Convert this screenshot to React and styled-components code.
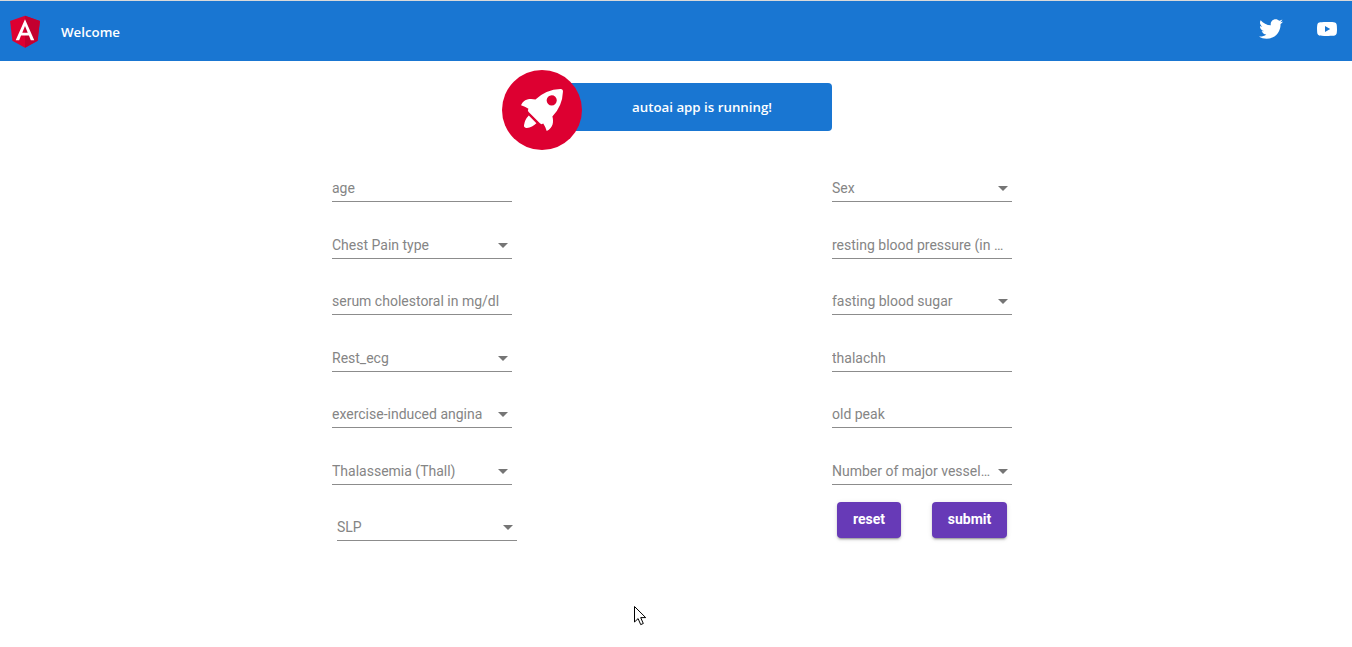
import React from "react";
import styled, { createGlobalStyle } from "styled-components";

const GlobalStyle = createGlobalStyle`
  html, body {
    margin: 0;
    padding: 0;
    height: 100%;
    overflow: hidden;
    background: #ffffff;
  }
`;

const Page = styled.div`
  position: relative;
  height: 647px;
  border-top: 1px solid #d9d9d9;
  box-sizing: border-box;
`;

const Toolbar = styled.header`
  height: 60px;
  background: #1976d2;
  display: flex;
  align-items: center;
  padding-left: 5px;
  color: #ffffff;
`;

const Logo = styled.svg`
  width: 40px;
  height: 40px;
  margin-right: 16px;
`;

const Title = styled.span`
  font-family: "Open Sans", sans-serif;
  font-weight: 600;
  font-size: 13.3px;
  padding-top: 2px;
`;

const Spacer = styled.div`
  flex: 1;
`;

const SocialIcon = styled.svg`
  width: 24px;
  height: 24px;
  fill: #ffffff;
  margin-right: ${(props) => props.$right}px;
  margin-top: -4px;
`;

const Hero = styled.div`
  display: flex;
  align-items: flex-start;
  width: 330px;
  margin: 9px 0 0 502px;
`;

const RocketBadge = styled.svg`
  width: 80px;
  height: 80px;
  flex: none;
  position: relative;
  z-index: 1;
`;

const Banner = styled.div`
  flex: 1;
  height: 48px;
  margin: 13px 0 0 -30px;
  padding-left: 20px;
  background: #1976d2;
  border-radius: 4px;
  color: #ffffff;
  font-family: "Open Sans", sans-serif;
  font-weight: 600;
  font-size: 13.3px;
  display: flex;
  align-items: center;
  justify-content: center;
`;

const Form = styled.form`
  display: flex;
  justify-content: space-between;
  width: 680px;
  margin: 11px 0 0 332px;
`;

const Column = styled.div`
  width: 180px;
  display: flex;
  flex-direction: column;
`;

const Field = styled.div`
  height: 56.5px;
  flex: none;
  margin-left: ${(props) => props.$shift || 0}px;
  display: flex;
`;

const FieldLine = styled.div`
  width: 180px;
  flex: none;
  height: 41px;
  border-bottom: 1px solid #8c8c8c;
  display: flex;
  align-items: flex-end;
  box-sizing: border-box;
  padding-bottom: 5px;
`;

const Label = styled.span`
  flex: 1;
  min-width: 0;
  font-family: Roboto, sans-serif;
  font-size: 14px;
  line-height: 16px;
  color: #858585;
  white-space: nowrap;
  overflow: hidden;
  text-overflow: ellipsis;
`;

const Caret = styled.span`
  flex: none;
  width: 0;
  height: 0;
  margin: 0 4px 5px 6px;
  border-left: 5px solid transparent;
  border-right: 5px solid transparent;
  border-top: 5px solid #757575;
`;

const Actions = styled.div`
  display: flex;
  gap: 31px;
  padding: 2px 0 0 5px;
`;

const ActionButton = styled.button`
  height: 36px;
  width: ${(props) => props.$width}px;
  padding: 0 0 2px;
  border: none;
  border-radius: 4px;
  background: #673ab7;
  color: #ffffff;
  font-family: Roboto, sans-serif;
  font-weight: 700;
  font-size: 14px;
  box-shadow: 0 3px 1px -2px rgba(0, 0, 0, 0.2), 0 2px 2px 0 rgba(0, 0, 0, 0.14),
    0 1px 5px 0 rgba(0, 0, 0, 0.12);
`;

const Pointer = styled.svg`
  position: absolute;
  left: 633px;
  top: 604px;
  width: 14px;
  height: 21px;
`;

const leftFields = [
  { label: "age" },
  { label: "Chest Pain type", select: true },
  { label: "serum cholestoral in mg/dl" },
  { label: "Rest_ecg", select: true },
  { label: "exercise-induced angina", select: true },
  { label: "Thalassemia (Thall)", select: true },
  { label: "SLP", select: true, shift: 5 },
];

const rightFields = [
  { label: "Sex", select: true },
  { label: "resting blood pressure (in mm Hg)" },
  { label: "fasting blood sugar", select: true },
  { label: "thalachh" },
  { label: "old peak" },
  { label: "Number of major vessels (0-3)", select: true },
];

const renderField = (field) => (
  <Field key={field.label} $shift={field.shift}>
    <FieldLine>
      <Label>{field.label}</Label>
      {field.select && <Caret />}
    </FieldLine>
  </Field>
);

const App = () => {
  return (
    <Page>
      <GlobalStyle />
      <Toolbar>
        <Logo viewBox="0 0 250 250">
          <polygon fill="#DD0031" points="125,30 31.9,63.2 46.1,186.3 125,230 203.9,186.3 218.1,63.2" />
          <polygon fill="#C3002F" points="125,30 125,230 203.9,186.3 218.1,63.2" />
          <path
            fill="#FFFFFF"
            d="M125,52.1L66.8,182.6h21.7l11.7-29.2h49.4l11.7,29.2h21.7L125,52.1z M142,135.4H108l17-40.9L142,135.4z"
          />
        </Logo>
        <Title>Welcome</Title>
        <Spacer />
        <SocialIcon $right={32} viewBox="0 0 24 24">
          <path d="M24 4.557c-.883.392-1.832.656-2.828.775 1.017-.609 1.798-1.574 2.165-2.724-.951.564-2.005.974-3.127 1.195-.897-.957-2.178-1.555-3.594-1.555-3.179 0-5.515 2.966-4.797 6.045-4.091-.205-7.719-2.165-10.148-5.144-1.29 2.213-.669 5.108 1.523 6.574-.806-.026-1.566-.247-2.229-.616-.054 2.281 1.581 4.415 3.949 4.89-.693.188-1.452.232-2.224.084.626 1.956 2.444 3.379 4.6 3.419-2.07 1.623-4.678 2.348-7.29 2.04 2.179 1.397 4.768 2.212 7.548 2.212 9.142 0 14.307-7.721 13.995-14.646.962-.695 1.797-1.562 2.457-2.549z" />
        </SocialIcon>
        <SocialIcon $right={13} viewBox="0 0 24 24">
          <path d="M10 15l5.19-3L10 9v6m11.56-7.83c.13.47.22 1.1.28 1.9.07.8.1 1.49.1 2.09L22 12c0 2.19-.16 3.8-.44 4.83-.25.9-.83 1.48-1.73 1.73-.47.13-1.33.22-2.65.28-1.3.07-2.49.1-3.59.1L12 19c-4.19 0-6.8-.16-7.83-.44-.9-.25-1.48-.83-1.73-1.73-.13-.47-.22-1.1-.28-1.9-.07-.8-.1-1.49-.1-2.09L2 12c0-2.19.16-3.8.44-4.83.25-.9.83-1.48 1.73-1.73.47-.13 1.33-.22 2.65-.28 1.3-.07 2.49-.1 3.59-.1L12 5c4.19 0 6.8.16 7.83.44.9.25 1.48.83 1.73 1.73z" />
        </SocialIcon>
      </Toolbar>

      <Hero>
        <RocketBadge viewBox="0 0 101.678 101.678">
          <circle cx="50.839" cy="50.839" r="50.839" fill="#dd0031" />
          <g transform="translate(24.185 24.185)" fill="#fff">
            <path
              transform="translate(0.371 3.363)"
              d="M3.4,42.615a3.084,3.084,0,0,0,3.553,3.553,21.419,21.419,0,0,0,12.215-6.107L9.511,30.4A21.419,21.419,0,0,0,3.4,42.615Z"
            />
            <path
              transform="translate(0 0.005)"
              d="M53.3,3.221A3.09,3.09,0,0,0,50.081,0,48.227,48.227,0,0,0,18.322,13.437c-6-1.666-14.991-1.221-18.322,7.218A33.892,33.892,0,0,1,9.439,25.1l-.333.666a3.013,3.013,0,0,0,.555,3.553L23.985,43.641a2.9,2.9,0,0,0,3.553.555l.666-.333A33.892,33.892,0,0,1,32.647,53.3c8.55-3.664,8.884-12.326,7.218-18.322A48.227,48.227,0,0,0,53.3,3.221ZM34.424,9.772a6.439,6.439,0,1,1,9.106,9.106,6.368,6.368,0,0,1-9.106,0A6.467,6.467,0,0,1,34.424,9.772Z"
            />
          </g>
        </RocketBadge>
        <Banner>autoai app is running!</Banner>
      </Hero>

      <Form>
        <Column>{leftFields.map(renderField)}</Column>
        <Column>
          {rightFields.map(renderField)}
          <Actions>
            <ActionButton type="button" $width={64}>reset</ActionButton>
            <ActionButton type="button" $width={75}>submit</ActionButton>
          </Actions>
        </Column>
      </Form>

      <Pointer viewBox="0 0 14 21">
        <path
          d="M1.5 1.5V17l3.6-3.4 2.6 6 2.6-1.1-2.6-5.9h5z"
          fill="#ffffff"
          stroke="#000000"
          strokeWidth="1"
        />
      </Pointer>
    </Page>
  );
};

export default App;
